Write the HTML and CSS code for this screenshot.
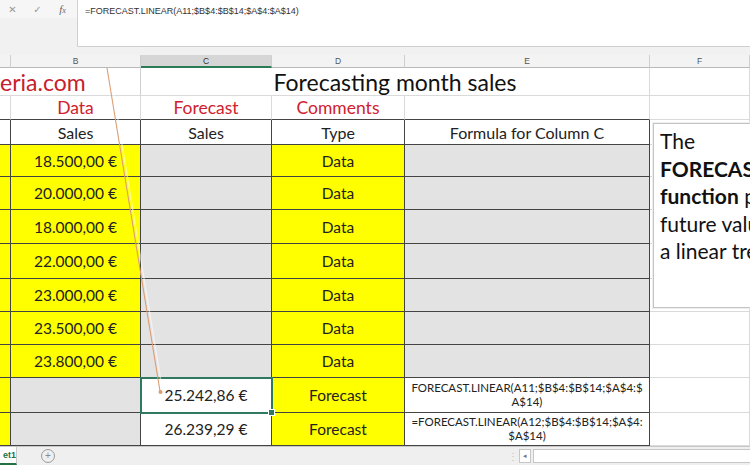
FILE: index.html
```html
<!DOCTYPE html>
<html>
<head>
<meta charset="utf-8">
<link rel="stylesheet" href="styles.css">
</head>
<body>
<div class="app">
  <div class="fbar">
    <div class="tools">
      <span class="ic ic-x">✕</span>
      <span class="ic ic-ok">✓</span>
      <span class="ic ic-fx"><i>f</i><span class="sub">x</span></span>
    </div>
    <div class="finput">=FORECAST.LINEAR(A11;$B$4:$B$14;$A$4:$A$14)</div>
  </div>
  <div class="gap"></div>
  <div class="sheet">
    <!-- column headers -->
    <div class="ch"></div>
    <div class="ch">B</div>
    <div class="ch ch-sel">C</div>
    <div class="ch">D</div>
    <div class="ch">E</div>
    <div class="ch">F</div>

    <!-- row 1 -->
    <div class="c r1 site">eria.com</div>
    <div class="c r1 title">Forecasting month sales</div>
    <div class="c r1"></div>

    <!-- row 2 -->
    <div class="c r2 tb"></div>
    <div class="c r2 tb red">Data</div>
    <div class="c r2 tb red">Forecast</div>
    <div class="c r2 tb red">Comments</div>
    <div class="c r2 tb"></div>
    <div class="c r2"></div>

    <!-- row 3 -->
    <div class="c d hd"></div>
    <div class="c d hd">Sales</div>
    <div class="c d hd">Sales</div>
    <div class="c d hd">Type</div>
    <div class="c d hd">Formula for Column C</div>
    <div class="c g"></div>

    <div class="c d y"></div><div class="c d y v">18.500,00 €</div><div class="c d gr"></div><div class="c d y v">Data</div><div class="c d gr"></div><div class="c g"></div>
    <div class="c d y"></div><div class="c d y v">20.000,00 €</div><div class="c d gr"></div><div class="c d y v">Data</div><div class="c d gr"></div><div class="c g"></div>
    <div class="c d y"></div><div class="c d y v">18.000,00 €</div><div class="c d gr"></div><div class="c d y v">Data</div><div class="c d gr"></div><div class="c g"></div>
    <div class="c d y"></div><div class="c d y v">22.000,00 €</div><div class="c d gr"></div><div class="c d y v">Data</div><div class="c d gr"></div><div class="c g"></div>
    <div class="c d y"></div><div class="c d y v">23.000,00 €</div><div class="c d gr"></div><div class="c d y v">Data</div><div class="c d gr"></div><div class="c g"></div>
    <div class="c d y"></div><div class="c d y v">23.500,00 €</div><div class="c d gr"></div><div class="c d y v">Data</div><div class="c d gr"></div><div class="c g"></div>
    <div class="c d y"></div><div class="c d y v">23.800,00 €</div><div class="c d gr"></div><div class="c d y v">Data</div><div class="c d gr"></div><div class="c g"></div>

    <div class="c d y"></div><div class="c d gr"></div><div class="c d v sel">25.242,86 €</div><div class="c d y v">Forecast</div><div class="c d f">FORECAST.LINEAR(A11;$B$4:$B$14;$A$4:$<br>A$14)</div><div class="c g"></div>
    <div class="c d y"></div><div class="c d gr"></div><div class="c d v">26.239,29 €</div><div class="c d y v">Forecast</div><div class="c d f">=FORECAST.LINEAR(A12;$B$4:$B$14;$A$4:<br>$A$14)</div><div class="c g"></div>
  </div>
  <div class="tabs">
    <div class="tab">et1</div>
    <div class="add">+</div>
    <div class="spacer"></div>
    <div class="grip">⋮</div>
    <div class="scroll">
      <div class="sbtn">◂</div>
      <div class="strack"></div>
    </div>
  </div>

  <div class="note">
    <p>The<br><b>FORECAST.LINEAR</b><br><b>function</b> predicts<br>future values along<br>a linear trend.</p>
  </div>

  <svg class="arrow" width="750" height="465" viewBox="0 0 750 465">
    <line x1="108" y1="68" x2="161" y2="391" stroke="#ffffff" stroke-opacity="0.5" stroke-width="1.5" transform="translate(1.5,0)"/>
    <line x1="107" y1="68" x2="160" y2="391" stroke="#dc9d72" stroke-width="1.1"/>
    <circle cx="160.5" cy="392" r="2" fill="#dc9d72"/>
  </svg>
</div>
</body>
</html>
```
FILE: styles.css
```css
html, body {
  margin: 0;
  padding: 0;
}
body {
  width: 750px;
  height: 465px;
  overflow: hidden;
  background: #ffffff;
  font-family: Lato, "Open Sans", sans-serif;
}
.app {
  position: relative;
  width: 750px;
  height: 465px;
  overflow: hidden;
  display: flex;
  flex-direction: column;
}

/* formula bar */
.fbar {
  height: 47px;
  display: flex;
  background: #f1f1f1;
  flex: none;
}
.tools {
  width: 77px;
  height: 18px;
  display: flex;
  align-items: center;
  gap: 0;
  background: #f6f6f6;
  font-family: "DejaVu Sans", sans-serif;
  color: #9a9a9a;
}
.ic {
  display: inline-flex;
  justify-content: center;
  width: 25px;
  font-size: 10px;
}
.ic-fx {
  font-family: "Liberation Serif", serif;
  color: #666;
  font-size: 11px;
}
.ic-fx .sub { font-size: 8px; margin-top: 3px; font-style: italic; }
.finput {
  flex: 1;
  background: #ffffff;
  border-left: 1px solid #d0d0d0;
  border-bottom: 1px solid #d0d0d0;
  font-family: "Liberation Sans", sans-serif;
  font-size: 9px;
  color: #333;
  padding: 6px 0 0 7px;
}
.gap {
  height: 8px;
  background: #f1f1f1;
  flex: none;
}

/* grid */
.sheet {
  display: grid;
  grid-template-columns: 11px 130px 131px 133px 245px 100px;
  grid-template-rows: 13px 28px 24px 25px 32px 33px 34px 35px 33px 33px 33px 35px 33px;
  flex: none;
}
.ch {
  box-sizing: border-box;
  background: #f3f3f3;
  border-right: 1px solid #cfcfcf;
  border-bottom: 1px solid #b9b9b9;
  font-family: "Liberation Sans", sans-serif;
  font-size: 8.5px;
  color: #555;
  display: flex;
  align-items: center;
  justify-content: center;
}
.ch-sel {
  background: #d6d6d6;
  border-bottom: 2px solid #2c7a55;
  color: #333;
}
.c {
  box-sizing: border-box;
  border-right: 1px solid #dadada;
  border-bottom: 1px solid #dadada;
  display: flex;
  align-items: center;
  justify-content: center;
  color: #222;
  font-size: 16px;
  white-space: nowrap;
  overflow: visible;
}
.site {
  grid-column: 1 / 3;
  justify-content: flex-start;
  color: #c8202c;
  font-size: 23px;
  border-right-color: #d0d0d0;
}
.title {
  grid-column: 3 / 6;
  font-size: 23px;
  color: #111;
}
.tb { border-bottom: 1px solid #444; }
.red {
  color: #d0212d;
  font-size: 17.5px;
}
.d {
  border-right: 1px solid #444;
  border-bottom: 1px solid #444;
}
.hd { font-size: 16px; }
.y { background: #ffff00; }
.gr { background: #e3e3e3; }
.v { font-size: 15.5px; }
.f {
  font-size: 11.5px;
  line-height: 14px;
  text-align: center;
  white-space: nowrap;
}
.g { border-bottom: 1px solid #dadada; }
.sel {
  position: relative;
  outline: 2px solid #2f7a5e;
  outline-offset: -1px;
  z-index: 1;
}
.sel::after {
  content: "";
  position: absolute;
  right: -4px;
  bottom: -4px;
  width: 5px;
  height: 5px;
  background: #2f7a5e;
  border: 1px solid #fff;
}

/* tabs */
.tabs {
  flex: 1;
  display: flex;
  align-items: stretch;
  background: #efefef;
  border-top: 1px solid #c8c8c8;
  font-family: "Liberation Sans", sans-serif;
}
.tab {
  width: 16px;
  background: #ffffff;
  color: #217346;
  font-size: 9px;
  font-weight: bold;
  display: flex;
  align-items: center;
  border-bottom: 2px solid #217346;
  border-right: 1px solid #c8c8c8;
  overflow: hidden;
  justify-content: flex-end;
}
.add {
  margin-left: 24px;
  width: 12px;
  height: 12px;
  align-self: center;
  border: 1px solid #9a9a9a;
  border-radius: 50%;
  color: #8a8a8a;
  font-size: 10px;
  line-height: 12px;
  text-align: center;
}
.spacer { flex: 1; }
.grip {
  color: #c2c2c2;
  font-size: 10px;
  display: flex;
  align-items: center;
  width: 11px;
}
.scroll {
  width: 231px;
  display: flex;
  align-items: center;
  gap: 2px;
}
.sbtn {
  width: 10px;
  height: 12px;
  background: #fff;
  border: 1px solid #c6c6c6;
  color: #777;
  font-size: 7px;
  display: flex;
  align-items: center;
  justify-content: center;
}
.strack {
  flex: 1;
  height: 12px;
  background: #fff;
  border: 1px solid #c6c6c6;
  border-right: none;
}

/* text box shape */
.note {
  position: absolute;
  left: 653px;
  top: 123px;
  width: 220px;
  height: 185px;
  box-sizing: border-box;
  background: #fff;
  border: 1px solid #c4c4c4;
  box-shadow: 0 0 0 1px #eeeeee;
  padding: 3px 0 0 6px;
  z-index: 3;
}
.note p {
  margin: 0;
  font-size: 21px;
  line-height: 27.5px;
  color: #111;
  white-space: nowrap;
}

.arrow {
  position: absolute;
  left: 0;
  top: 0;
  z-index: 4;
  pointer-events: none;
}
```
